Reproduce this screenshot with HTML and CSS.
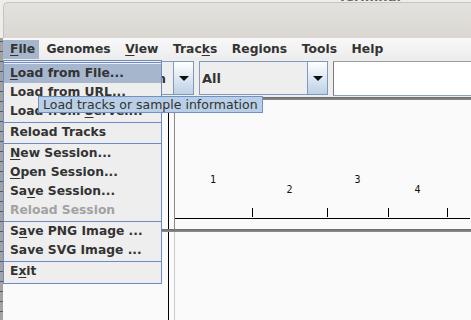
FILE: index.html
```html
<!DOCTYPE html>
<html lang="en">
<head>
  <meta charset="UTF-8">
  <title>IGV</title>
  <link rel="stylesheet" href="styles.css">
</head>
<body>

<div class="screen">
  <div class="desk-strip"><span class="desk-title">Terminal</span></div>

  <div class="frame">
    <div class="edge"></div>
    <div class="window">
      <div class="titlebar"></div>

      <div class="menubar">
        <span class="menu open"><u>F</u>ile</span>
        <span class="menu">Genomes</span>
        <span class="menu"><u>V</u>iew</span>
        <span class="menu">Trac<u>k</u>s</span>
        <span class="menu">Regions</span>
        <span class="menu">Tools</span>
        <span class="menu">Help</span>
      </div>

      <div class="toolbar">
        <div class="combo genome">
          <span class="combo-text">Human</span>
          <span class="combo-arrow"><i class="tri"></i></span>
        </div>
        <div class="combo chrom">
          <span class="combo-text">All</span>
          <span class="combo-arrow"><i class="tri"></i></span>
        </div>
        <div class="locus"></div>
      </div>

      <div class="band"></div>

      <div class="panel header">
        <div class="names"></div>
        <div class="attrs"></div>
        <svg class="ruler" width="295" height="129" viewBox="0 0 295 129">
          <g class="labels">
            <text x="38" y="83">1</text>
            <text x="114.5" y="93">2</text>
            <text x="182.5" y="83">3</text>
            <text x="242.5" y="93">4</text>
          </g>
          <g class="ticks">
            <line x1="77.5" y1="108" x2="77.5" y2="117"/>
            <line x1="152.5" y1="108" x2="152.5" y2="117"/>
            <line x1="213.5" y1="108" x2="213.5" y2="117"/>
            <line x1="272.5" y1="108" x2="272.5" y2="117"/>
            <line x1="0" y1="118.5" x2="295" y2="118.5"/>
          </g>
        </svg>
      </div>

      <div class="band"></div>

      <div class="panel data">
        <div class="names"></div>
        <div class="attrs"></div>
        <div class="tracks"></div>
      </div>
    </div>
  </div>

  <div class="popup">
    <div class="popup-top"></div>
    <div class="item active"><u>L</u>oad from File...</div>
    <div class="item">Load from URL...</div>
    <div class="item">Load from <u>S</u>erver...</div>
    <div class="sep"></div>
    <div class="item">Reload Tracks</div>
    <div class="sep"></div>
    <div class="item"><u>N</u>ew Session...</div>
    <div class="item"><u>O</u>pen Session...</div>
    <div class="item">Sa<u>v</u>e Session...</div>
    <div class="item disabled">Reload Session</div>
    <div class="sep"></div>
    <div class="item">S<u>a</u>ve PNG Image ...</div>
    <div class="item">Save SVG Image ...</div>
    <div class="sep"></div>
    <div class="item">E<u>x</u>it</div>
  </div>

  <div class="tooltip">Load tracks or sample information</div>
</div>

</body>
</html>
```

FILE: styles.css
```css
body { margin: 0; background: #efeeec; font-family: "DejaVu Sans", sans-serif; font-size: 12.3px; font-weight: bold; color: #333; }
u { text-decoration: underline; text-decoration-thickness: 1px; text-underline-offset: 2px; }

.screen { position: relative; width: 471px; height: 320px; overflow: hidden; }

.desk-strip { height: 2px; overflow: hidden; background: #efeeec; }
.desk-title { display: block; margin: -10px 0 0 338px; font-size: 13px; line-height: 13px; color: #666; }

.frame { display: flex; height: 318px; }
.edge { width: 3px; flex: none; background: linear-gradient(#eeedeb 0 36px, transparent 36px), repeating-linear-gradient(#a2a2a2 0 9px, #5a5a5a 9px 10px); }
.window { flex: 1; display: flex; flex-direction: column; min-width: 0; }

.titlebar { height: 36px; box-sizing: border-box; border-top: 1px solid #c7c4bf; border-left: 1px solid #c7c4bf; border-top-left-radius: 5px; background: linear-gradient(#e4e2de, #dad7d2); }

.menubar { height: 22px; box-sizing: border-box; padding-top: 2px; display: flex; background: linear-gradient(#f8f8f8, #ececec); }
.menu { height: 19px; line-height: 19px; padding: 0 7.3px; white-space: nowrap; }
.menu.open { padding: 0 4px 0 7px; background: #a6b7cd; }

.toolbar { height: 37px; box-sizing: border-box; padding: 1px 0 0 5px; display: flex; gap: 5px; background: #eeeeee; }
.combo { height: 34px; box-sizing: border-box; display: flex; border: 1px solid #7f98bd; background: #eeeeee; }
.combo.genome { width: 186px; }
.combo.chrom { width: 129px; }
.combo-text { flex: 1; display: flex; align-items: center; padding: 0 2px; overflow: hidden; white-space: nowrap; font-size: 13px; }
.genome .combo-text { justify-content: flex-end; padding-right: 7px; }
.combo-arrow { width: 19px; display: flex; align-items: center; justify-content: center; border-left: 1px solid #7f98bd; background: linear-gradient(#ffffff, #bcd1e6); }
.tri { width: 0; height: 0; border-left: 5px solid transparent; border-right: 5px solid transparent; border-top: 5px solid #111; }
.locus { flex: 1; height: 35px; box-sizing: border-box; background: #fff; border-top: 1px solid #9a9a9a; border-left: 1px solid #7a7a7a; border-bottom: 1px solid #8ea2b6; }

.band { height: 3px; flex: none; background: linear-gradient(#6a6a6a, #8e8e8e); }

.panel { display: flex; background: #fafafa; }
.panel.header { height: 129px; flex: none; }
.panel.data { flex: 1; }
.names { width: 165px; flex: none; border-right: 1px solid #000; }
.attrs { width: 5px; flex: none; border-right: 1px solid #8a8a8a; }
.data .attrs { border-right-color: #c8c8c8; }
.tracks { flex: 1; }

.ruler { display: block; flex: none; }
.ruler .labels { font-family: "DejaVu Sans Mono", monospace; font-size: 10px; font-weight: normal; fill: #111; text-anchor: middle; }
.ruler .ticks line { stroke: #000; stroke-width: 1; }

.popup { position: absolute; left: 3px; top: 60px; width: 159px; box-sizing: border-box; border: 1px solid #6c8bc6; padding-bottom: 2px; background: #eeeeee; }
.popup-top { height: 1px; margin: 1px 0; background: #6c8bc6; }
.item { height: 19px; line-height: 19px; padding-left: 6px; white-space: nowrap; }
.item.active { background: #a6b7cd; }
.item.disabled { color: #a2a2a2; }
.sep { height: 1px; margin-top: 1px; background: #6c8bc6; }

.tooltip { position: absolute; left: 38px; top: 96px; height: 17px; line-height: 16px; box-sizing: border-box; padding: 0 4px; border: 1px solid #7190c6; background: #b8cfe5; font-size: 12.5px; font-weight: normal; color: #333; white-space: nowrap; }
```
